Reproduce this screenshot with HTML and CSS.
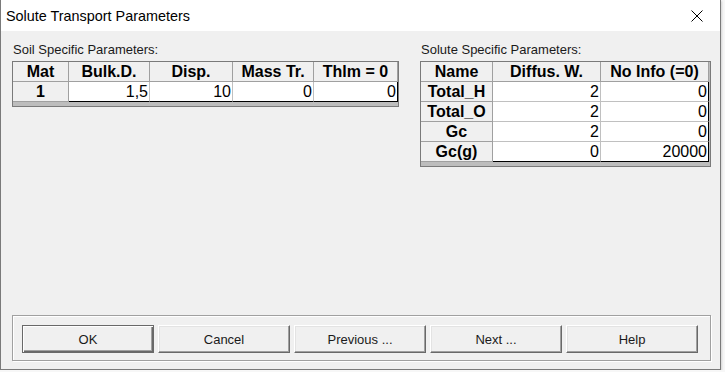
FILE: index.html
```html
<!DOCTYPE html>
<html>
  <head>
    <meta charset="UTF-8" />
    <title>Solute Transport Parameters</title>
    <link rel="stylesheet" href="styles.css">
  </head>
  <body>
    <div class="window">
      <div class="titlebar">
        <span class="title">Solute Transport Parameters</span>
        <span class="close">
          <svg viewBox="0 0 12 12" class="close-icon">
            <path d="M0.5 0.5 L11.5 11.5 M11.5 0.5 L0.5 11.5"></path>
          </svg>
        </span>
      </div>
      <div class="content">
        <div class="panels">
          <div class="panel panel-soil">
            <div class="label">Soil Specific Parameters:</div>
            <div class="frame">
              <table class="grid">
                <tr>
                  <th class="w-mat">Mat</th>
                  <th class="w-bulk">Bulk.D.</th>
                  <th class="w-disp">Disp.</th>
                  <th class="w-mass">Mass Tr.</th>
                  <th class="w-thlm">Thlm = 0</th>
                </tr>
                <tr class="last">
                  <th>1</th>
                  <td>1,5</td>
                  <td>10</td>
                  <td>0</td>
                  <td class="end">0</td>
                </tr>
              </table>
            </div>
          </div>
          <div class="panel panel-solute">
            <div class="label">Solute Specific Parameters:</div>
            <div class="frame">
              <table class="grid">
                <tr>
                  <th class="w-name">Name</th>
                  <th class="w-val">Diffus. W.</th>
                  <th class="w-val">No Info (=0)</th>
                </tr>
                <tr>
                  <th>Total_H</th>
                  <td>2</td>
                  <td class="end">0</td>
                </tr>
                <tr>
                  <th>Total_O</th>
                  <td>2</td>
                  <td class="end">0</td>
                </tr>
                <tr>
                  <th>Gc</th>
                  <td>2</td>
                  <td class="end">0</td>
                </tr>
                <tr class="last">
                  <th>Gc(g)</th>
                  <td>0</td>
                  <td class="end">20000</td>
                </tr>
              </table>
            </div>
          </div>
        </div>
        <div class="buttons">
          <button class="btn btn-default">OK</button>
          <button class="btn">Cancel</button>
          <button class="btn">Previous ...</button>
          <button class="btn">Next ...</button>
          <button class="btn">Help</button>
        </div>
      </div>
    </div>
  </body>
</html>
```

FILE: styles.css
```css
:root {
  --face: #f0f0f0;
  --shadow: #a0a0a0;
  --dark: #696969;
  --line: #c0c0c0;
}

body {
  margin: 0;
  background: #f7f7f7;
  font-family: "Liberation Sans", Arial, sans-serif;
  color: #000;
}

.window {
  width: 719px;
  height: 369px;
  background: var(--face);
  border: 1px solid #7a7a7a;
  border-top: none;
  display: flex;
  flex-direction: column;
  box-shadow: 1px 1px 2px rgba(0, 0, 0, 0.15);
}

.titlebar {
  height: 31px;
  background: #fff;
  display: flex;
  align-items: center;
  justify-content: space-between;
  padding-left: 5px;
}

.title {
  font-size: 14.4px;
}

.close {
  width: 46px;
  height: 31px;
  display: flex;
  align-items: center;
  justify-content: center;
}

.close-icon {
  width: 12px;
  height: 12px;
  stroke: #000;
  stroke-width: 1;
  fill: none;
}

.content {
  flex: 1;
  display: flex;
  flex-direction: column;
  padding: 11px 10px 8px 11px;
}

.panels {
  display: flex;
  gap: 21px;
  align-items: flex-start;
}

.label {
  font-size: 13px;
  line-height: 15px;
  margin-bottom: 4px;
  padding-left: 1px;
  color: #1a1a1a;
}

.frame {
  border: 1px solid #7a7a7a;
  background: #bdbdbd;
  padding-bottom: 4px;
}

.panel-soil .frame {
  width: 385px;
}

.panel-solute .frame {
  width: 289px;
}

.grid {
  border-collapse: separate;
  border-spacing: 0;
  table-layout: fixed;
  font-size: 16px;
}

.grid th,
.grid td {
  box-sizing: border-box;
  height: 20px;
  line-height: 19px;
  padding: 0;
  white-space: nowrap;
  overflow: hidden;
}

.grid th {
  background: var(--face);
  border-right: 1px solid var(--shadow);
  border-bottom: 1px solid var(--shadow);
  font-weight: bold;
  text-align: center;
}

.grid td {
  background: #fff;
  border-right: 1px solid var(--line);
  border-bottom: 1px solid var(--line);
  text-align: right;
  padding-right: 1px;
}

.grid td.end {
  border-right-color: #000;
}

.grid tr.last td {
  border-bottom-color: #000;
}

.w-mat { width: 56px; }
.w-bulk { width: 81px; }
.w-disp { width: 83px; }
.w-mass { width: 81px; }
.w-thlm { width: 84px; }
.w-name { width: 72px; }
.w-val { width: 108px; }

.buttons {
  margin-top: auto;
  border: 1px solid var(--shadow);
  box-shadow: inset 1px 1px #fff, 1px 1px #fff;
  display: flex;
  align-items: flex-start;
  gap: 4px;
  padding: 9px 0 0 9px;
  box-sizing: border-box;
  height: 46px;
  width: 699px;
}

.btn {
  width: 132px;
  height: 28px;
  background: var(--face);
  font-family: "Liberation Sans", Arial, sans-serif;
  font-size: 13px;
  color: #1a1a1a;
  border: 1px solid;
  border-color: #fff var(--dark) var(--dark) #fff;
  box-shadow: inset -1px -1px var(--shadow), inset 1px 1px #e3e3e3;
  padding: 0;
}

.btn-default {
  border-color: var(--dark);
  box-shadow: inset 1px 1px #fff, inset -1px -1px var(--dark), inset -2px -2px var(--shadow);
}
```
